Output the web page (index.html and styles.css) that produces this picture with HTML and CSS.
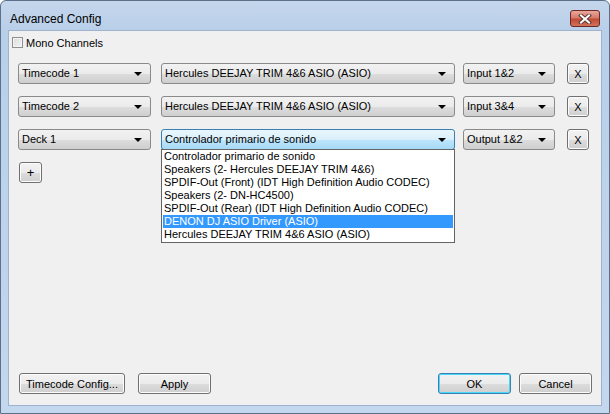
FILE: index.html
```html
<!DOCTYPE html>
<html>
<head>
    <title>Advanced Config</title>
    <link rel="stylesheet" href="styles.css">
</head>
<body>
    <div class="window">
        <div class="titlebar">
            <span class="title">Advanced Config</span>
            <span class="close-btn">
                <svg width="14" height="10" viewBox="0 0 14 10">
                    <path d="M3 1.5 L11 8.5 M11 1.5 L3 8.5" stroke="#5a3a38" stroke-width="4" stroke-linecap="square"/>
                    <path d="M3 1.5 L11 8.5 M11 1.5 L3 8.5" stroke="#ffffff" stroke-width="2" stroke-linecap="square"/>
                </svg>
            </span>
        </div>
        <div class="client">
            <label class="check-row">
                <span class="checkbox"></span>
                Mono Channels
            </label>

            <div class="route-row">
                <div class="combo combo-deck">Timecode 1<span class="arrow"></span></div>
                <div class="combo combo-device">Hercules DEEJAY TRIM 4&amp;6 ASIO (ASIO)<span class="arrow"></span></div>
                <div class="combo combo-channel">Input 1&amp;2<span class="arrow"></span></div>
                <div class="btn btn-x">X</div>
            </div>

            <div class="route-row">
                <div class="combo combo-deck">Timecode 2<span class="arrow"></span></div>
                <div class="combo combo-device">Hercules DEEJAY TRIM 4&amp;6 ASIO (ASIO)<span class="arrow"></span></div>
                <div class="combo combo-channel">Input 3&amp;4<span class="arrow"></span></div>
                <div class="btn btn-x">X</div>
            </div>

            <div class="route-row">
                <div class="combo combo-deck">Deck 1<span class="arrow"></span></div>
                <div class="combo combo-device combo-open">Controlador primario de sonido<span class="arrow"></span>
                    <ul class="dropdown">
                        <li>Controlador primario de sonido</li>
                        <li>Speakers (2- Hercules DEEJAY TRIM 4&amp;6)</li>
                        <li>SPDIF-Out (Front) (IDT High Definition Audio CODEC)</li>
                        <li>Speakers (2- DN-HC4500)</li>
                        <li>SPDIF-Out (Rear) (IDT High Definition Audio CODEC)</li>
                        <li class="selected">DENON DJ ASIO Driver (ASIO)</li>
                        <li>Hercules DEEJAY TRIM 4&amp;6 ASIO (ASIO)</li>
                    </ul>
                </div>
                <div class="combo combo-channel">Output 1&amp;2<span class="arrow"></span></div>
                <div class="btn btn-x">X</div>
            </div>

            <div class="add-row">
                <div class="btn btn-add">+</div>
            </div>

            <div class="footer">
                <div class="btn btn-timecode">Timecode Config...</div>
                <div class="btn btn-apply">Apply</div>
                <div class="spacer"></div>
                <div class="btn btn-ok">OK</div>
                <div class="btn btn-cancel">Cancel</div>
            </div>
        </div>
    </div>
</body>
</html>
```

FILE: styles.css
```css
body {
    margin: 0;
    font-family: "Liberation Sans", Arial, sans-serif;
    font-size: 11px;
    color: #000;
}
.window {
    width: 610px;
    height: 414px;
    box-sizing: border-box;
    border: 1px solid #5d7089;
    border-radius: 6px 6px 0 0;
    background: linear-gradient(to bottom, #c4d6ec 0px, #b9cfe9 30px, #c3d7ee 100%);
    display: flex;
    flex-direction: column;
}
.titlebar {
    height: 29px;
    display: flex;
    align-items: center;
    padding: 0 0 0 9px;
    position: relative;
}
.title {
    font-size: 12px;
    color: #000;
    margin-top: 6px;
}
.close-btn {
    position: absolute;
    right: 9px;
    top: 9px;
    width: 30px;
    height: 17px;
    box-sizing: border-box;
    border: 1px solid #6d2a24;
    border-radius: 3px;
    background: linear-gradient(to bottom, #e8a89b 0%, #d77a69 45%, #c04b36 55%, #d2735c 100%);
    display: flex;
    align-items: center;
    justify-content: center;
}
.client {
    flex: 1;
    margin: 0 7px 7px 7px;
    background: #f0f0f0;
    border: 1px solid #9fb4cc;
    display: flex;
    flex-direction: column;
}
.check-row {
    display: flex;
    align-items: center;
    gap: 3px;
    margin: 5px 0 0 3px;
    height: 13px;
}
.checkbox {
    width: 11px;
    height: 11px;
    box-sizing: border-box;
    border: 1px solid #8f8f8f;
    background: linear-gradient(135deg, #dcdcdc 0%, #f4f4f4 100%);
    box-shadow: inset 0 0 0 1px #f4f4f4;
}
.route-row {
    display: flex;
    align-items: center;
    margin-left: 9px;
    height: 21px;
    margin-top: 12px;
}
.check-row + .route-row {
    margin-top: 14px;
}
.combo {
    position: relative;
    height: 21px;
    box-sizing: border-box;
    border: 1px solid #8a8a8a;
    border-radius: 3px;
    background: linear-gradient(to bottom, #f2f2f2 0%, #ebebeb 50%, #dddddd 51%, #cfcfcf 100%);
    padding: 0 0 0 3px;
    line-height: 19px;
    white-space: nowrap;
}
.combo-deck {
    width: 133px;
    margin-right: 10px;
}
.combo-device {
    width: 294px;
    margin-right: 8px;
}
.combo-channel {
    width: 92px;
    margin-right: 12px;
}
.combo-open {
    border-color: #3c7fb1;
    background: linear-gradient(to bottom, #eaf6fd 0%, #d9f0fc 50%, #bee6fd 51%, #a7d9f5 100%);
}
.arrow {
    position: absolute;
    right: 8px;
    top: 8px;
    width: 0;
    height: 0;
    border-left: 4px solid transparent;
    border-right: 4px solid transparent;
    border-top: 4px solid #000;
}
.dropdown {
    position: absolute;
    left: -1px;
    top: 19px;
    width: 294px;
    box-sizing: border-box;
    margin: 0;
    padding: 0 1px 1px;
    list-style: none;
    background: #fff;
    border: 1px solid #646464;
    z-index: 2;
}
.dropdown li {
    height: 13px;
    line-height: 13px;
    padding-left: 1px;
}
.dropdown li.selected {
    background: #3399ff;
    color: #fff;
}
.btn {
    height: 21px;
    box-sizing: border-box;
    border: 1px solid #707070;
    border-radius: 3px;
    background: linear-gradient(to bottom, #f2f2f2 0%, #ebebeb 50%, #dddddd 51%, #cfcfcf 100%);
    box-shadow: inset 0 0 0 1px #fcfcfc;
    display: flex;
    align-items: center;
    justify-content: center;
}
.btn-x {
    width: 22px;
    font-size: 11px;
}
.add-row {
    margin: 12px 0 0 10px;
}
.btn-add {
    width: 23px;
    font-size: 13px;
}
.footer {
    margin-top: auto;
    margin-bottom: 11px;
    display: flex;
    padding: 0 9px 0 10px;
}
.btn-timecode {
    width: 106px;
    margin-right: 13px;
}
.btn-apply {
    width: 73px;
}
.spacer {
    flex: 1;
}
.btn-ok {
    width: 73px;
    margin-right: 8px;
    border-color: #3c7fb1;
    box-shadow: inset 0 0 0 1px #48d8fb;
}
.btn-cancel {
    width: 73px;
}
```
